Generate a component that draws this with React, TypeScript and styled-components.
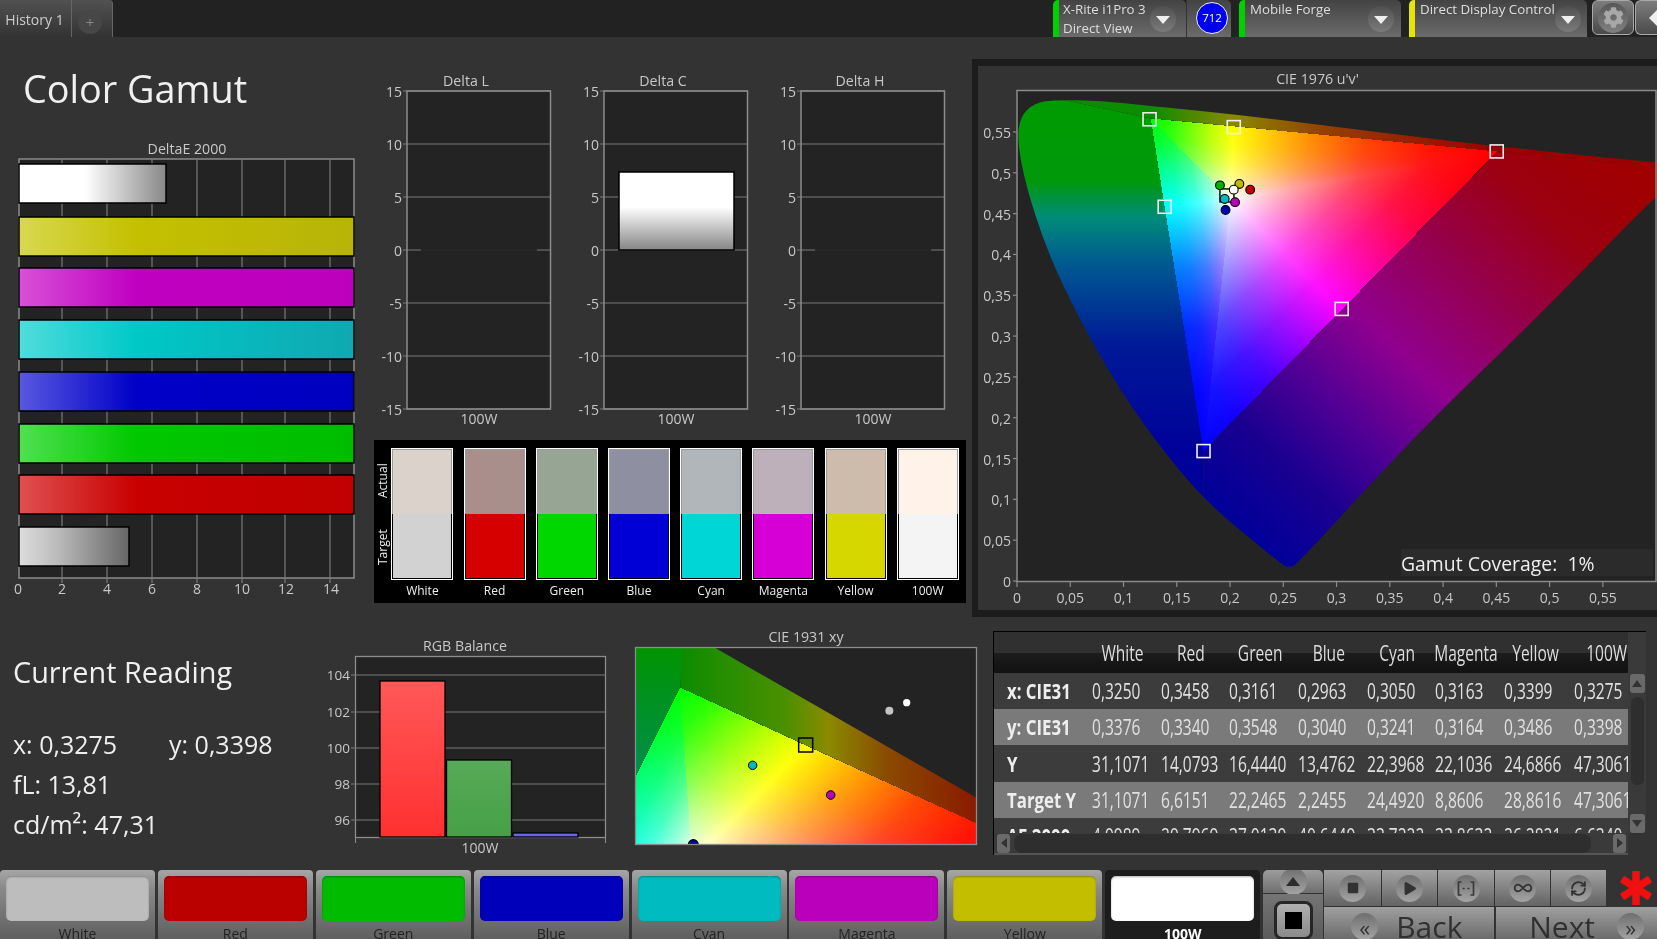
import React from 'react';
import styled, { createGlobalStyle } from 'styled-components';
import { Infinity as InfinityIcon, Play, RefreshCw, Square } from 'lucide-react';
import { FaCog } from 'react-icons/fa';

type Pt = [number, number];

const GlobalStyle = createGlobalStyle`
  html, body { margin: 0; padding: 0; background: #333; overflow: hidden; }
  body { font-family: "Open Sans", "Noto Sans", sans-serif; color: #ddd; }
  svg text { font-family: "Open Sans", "Noto Sans", sans-serif; }
`;

const Page = styled.div`
  width: 1657px;
  height: 939px;
  display: flex;
  flex-direction: column;
  overflow: hidden;
  background: #333;
`;

/* ---------- top bar ---------- */
const TopBar = styled.header`
  height: 37px;
  flex: none;
  display: flex;
  justify-content: space-between;
  background: #222;
`;
const Tabs = styled.div`
  display: flex;
`;
const Tab = styled.div`
  height: 37px;
  width: ${(p) => p.$w}px;
  box-sizing: border-box;
  display: flex;
  align-items: center;
  justify-content: ${(p) => (p.$last ? 'flex-start' : 'center')};
  padding: ${(p) => (p.$last ? '0 0 0 6px' : '2px 2px 0 0')};
  font-size: 14px;
  color: #ccc;
  border-right: 1px solid #666;
  border-radius: ${(p) => (p.$last ? '0 4px 0 0' : '0')};
  background: linear-gradient(#515151, #333);
`;
const PlusKnob = styled.span`
  width: 24px;
  height: 24px;
  border-radius: 50%;
  background: #474747;
  color: #888;
  font-size: 15px;
  line-height: 24px;
  text-align: center;
  margin-top: 6px;
`;
const Devices = styled.div`
  display: flex;
`;
const Device = styled.div`
  height: 37px;
  width: ${(p) => p.$w}px;
  margin-left: ${(p) => p.$ml}px;
  box-sizing: border-box;
  border-left: 6px solid ${(p) => p.$accent};
  border-radius: 5px 5px 0 0;
  background: linear-gradient(#434343, #6b6b6b);
  display: flex;
  justify-content: space-between;
  padding: 0 ${(p) => p.$pr}px 0 ${(p) => p.$pl}px;
  font-size: 13.3px;
  line-height: 19px;
  color: #ddd;
  white-space: nowrap;
`;
const Dropdown = styled.span`
  width: 26px;
  height: 26px;
  margin-top: 6px;
  border-radius: 50%;
  background: linear-gradient(#505050, #7b7b7b);
  display: flex;
  align-items: center;
  justify-content: center;
  flex: none;
  &::after {
    content: '';
    margin-top: 2px;
    border-left: 7px solid transparent;
    border-right: 7px solid transparent;
    border-top: 8px solid #eee;
  }
`;
const BadgeCell = styled.div`
  width: 45px;
  height: 37px;
  box-sizing: border-box;
  border-left: 1px solid #333;
  border-radius: 0 5px 0 0;
  background: linear-gradient(#434343, #6b6b6b);
  padding: 2px 0 0 9px;
`;
const Badge = styled.div`
  width: 32px;
  height: 32px;
  box-sizing: border-box;
  border-radius: 50%;
  border: 1px solid #eef;
  background: #0000ee;
  color: #fff;
  font-size: 11.5px;
  line-height: 30px;
  text-align: center;
`;
const TopButton = styled.div`
  height: 35px;
  width: ${(p) => p.$w}px;
  margin-left: ${(p) => p.$ml}px;
  box-sizing: border-box;
  border: 1px solid #aaa;
  border-right: ${(p) => (p.$open ? 'none' : '1px solid #aaa')};
  border-radius: ${(p) => (p.$open ? '6px 0 0 6px' : '6px')};
  background: linear-gradient(#7d7d7d, #4a4a4a);
  display: flex;
  align-items: center;
  justify-content: center;
  color: #a8a8a8;
`;
const GearKnob = styled.span`
  width: 30px;
  height: 30px;
  border-radius: 50%;
  background: linear-gradient(#585858, #808080);
  display: flex;
  align-items: center;
  justify-content: center;
`;
const LeftArrow = styled.span`
  margin-left: 12px;
  border-top: 8px solid transparent;
  border-bottom: 8px solid transparent;
  border-right: 8px solid #eee;
`;

/* ---------- upper part ---------- */
const Upper = styled.section`
  height: 580px;
  flex: none;
  display: flex;
`;
const GamutColumn = styled.div`
  width: 374px;
  flex: none;
  padding-top: 27px;
  box-sizing: border-box;
`;
const PageTitle = styled.h1`
  margin: 0 0 24px 23px;
  font-size: 37.8px;
  font-weight: 400;
  line-height: 50px;
  color: #f0f0f0;
`;
const ChartTitle = styled.div`
  height: ${(p) => p.$h || 20}px;
  line-height: ${(p) => (p.$h || 20) + (p.$drop ? 2 : 0)}px;
  font-size: 14.2px;
  text-align: center;
  color: #c8c8c8;
  white-space: nowrap;
`;
const DeltaColumn = styled.div`
  width: 592px;
  flex: none;
  padding-top: 33px;
  box-sizing: border-box;
`;
const DeltaRow = styled.div`
  display: flex;
  gap: 27px;
  padding-left: 7px;
`;
const DeltaChart = styled.div`
  width: 170px;
`;
const Drawing = styled.svg`
  display: block;
  overflow: visible;
`;
const SwatchPanel = styled.div`
  margin-top: 10px;
  width: 592px;
  height: 163px;
  box-sizing: border-box;
  background: #000;
  padding-top: 8px;
  display: flex;
`;
const SideLabels = styled.div`
  width: 17.4px;
  flex: none;
  height: 132px;
  display: flex;
  flex-direction: column;
`;
const SideLabel = styled.span`
  flex: 1;
  writing-mode: vertical-rl;
  transform: rotate(180deg);
  text-align: center;
  font-size: 12px;
  line-height: 17px;
  color: #eee;
`;
const Swatches = styled.div`
  display: grid;
  grid-template-columns: repeat(8, 62px);
  column-gap: 10.2px;
`;
const SwatchCol = styled.div`
  text-align: center;
  font-size: 12px;
  line-height: 22px;
  color: #eee;
`;
const SwatchBox = styled.div`
  height: 132px;
  box-sizing: border-box;
  border: 1px solid #fff;
  display: flex;
  flex-direction: column;
`;
const SwatchHalf = styled.div`
  flex: 1;
  box-sizing: border-box;
  background: ${(p) => p.$c};
  border: 1px solid ${(p) => (p.$frame ? '#9a9a9a' : 'transparent')};
  ${(p) => (p.$frame ? 'border-bottom: none;' : 'border-top: none;')}
  background-clip: ${(p) => (p.$frame ? 'border-box' : 'padding-box')};
`;
const CiePanel = styled.div`
  margin: 22px 0 0 6px;
  width: 685px;
  box-sizing: border-box;
  border: 7px solid #1c1c1c;
  border-right: none;
  border-left-width: 6px;
  position: relative;
`;
const CoverageBox = styled.div`
  position: absolute;
  left: 423px;
  top: 483px;
  width: 252px;
  height: 27px;
  background: #2b2b2b;
  font-size: 19.4px;
  line-height: 29px;
  color: #eee;
  white-space: pre;
`;

/* ---------- lower part ---------- */
const Lower = styled.section`
  height: 253px;
  flex: none;
  display: flex;
  align-items: flex-start;
`;
const Reading = styled.div`
  width: 324px;
  flex: none;
  box-sizing: border-box;
  padding: 35px 0 0 13px;
`;
const ReadingTitle = styled.div`
  font-size: 28.8px;
  line-height: 40px;
  color: #f0f0f0;
  margin-bottom: 32px;
`;
const ReadingRow = styled.div`
  display: grid;
  grid-template-columns: 156px auto;
  font-size: 25px;
  line-height: 40px;
  color: #eee;
`;
const RgbChart = styled.div`
  width: 282px;
  flex: none;
  padding-top: 19px;
`;
const XyChart = styled.div`
  width: 342px;
  flex: none;
  margin-left: 29px;
  padding-top: 10px;
`;
const TablePanel = styled.div`
  width: 653px;
  height: 224px;
  flex: none;
  margin: 14px 0 0 16px;
  box-sizing: border-box;
  border-top: 1px solid #000;
  border-left: 1px solid #000;
  display: grid;
  grid-template-columns: 634px 18px;
  grid-template-rows: 201px 22px;
  background: #333;
`;
const TableView = styled.div`
  overflow: hidden;
`;
const Row = styled.div`
  display: grid;
  grid-template-columns: 94px repeat(6, 68.7px) 70px 74px;
  height: ${(p) => p.$h}px;
  align-items: center;
  font-size: 21px;
  white-space: nowrap;
  background: ${(p) => p.$bg};
`;
const HeadCell = styled.div`
  display: flex;
  justify-content: center;
`;
const LabelCell = styled.div`
  padding-left: 13px;
  font-weight: 700;
  color: #eee;
`;
const ValueCell = styled.div`
  padding-left: 4px;
  color: #e0e0e0;
`;
const Narrow = styled.span`
  display: inline-block;
  transform: scaleX(${(p) => p.$x || 0.74});
  transform-origin: ${(p) => (p.$center ? 'center' : 'left')} center;
`;
const VScroll = styled.div`
  background: #3a3a3a;
  display: flex;
  flex-direction: column;
  align-items: center;
  padding-top: 42px;
  box-sizing: border-box;
  gap: 4px;
`;
const ArrowBtn = styled.div`
  width: 15px;
  height: 19px;
  flex: none;
  border-radius: 3px;
  background: #6a6a6a;
  display: flex;
  align-items: center;
  justify-content: center;
  &::after {
    content: '';
    border-left: 5px solid transparent;
    border-right: 5px solid transparent;
    ${(p) => (p.$down ? 'border-top: 7px solid #333;' : 'border-bottom: 7px solid #333;')}
  }
`;
const VThumb = styled.div`
  width: 13px;
  height: 88px;
  border-radius: 6px;
  background: #2e2e2e;
  margin-bottom: 25px;
`;
const HScroll = styled.div`
  background: #3a3a3a;
  display: flex;
  align-items: center;
  gap: 4px;
  padding-left: 3px;
  box-sizing: border-box;
  border-bottom: 2px solid #555;
`;
const HArrow = styled.div`
  width: 13px;
  height: 19px;
  flex: none;
  border-radius: 3px;
  background: #6a6a6a;
  display: flex;
  align-items: center;
  justify-content: center;
  &::after {
    content: '';
    border-top: 5px solid transparent;
    border-bottom: 5px solid transparent;
    ${(p) => (p.$right ? 'border-left: 6px solid #333;' : 'border-right: 6px solid #333;')}
  }
`;
const HThumb = styled.div`
  width: 577px;
  height: 19px;
  border-radius: 8px;
  background: #2e2e2e;
  margin-right: 18px;
`;

/* ---------- bottom bar ---------- */
const BottomBar = styled.footer`
  height: 69px;
  flex: none;
  display: flex;
  overflow: hidden;
`;
const ColorButtons = styled.div`
  display: flex;
  gap: 2.9px;
`;
const ColorButton = styled.div`
  width: 155px;
  height: 69px;
  box-sizing: border-box;
  padding: 6px 6px 0;
  overflow: hidden;
  border-radius: 4px 4px 0 0;
  background: ${(p) => (p.$active ? '#1d1d1d' : 'linear-gradient(#a6a6a6, #8b8b8b 25%, #5f5f5f)')};
  text-align: center;
  font-size: 14px;
  line-height: 24px;
  font-weight: ${(p) => (p.$active ? 700 : 400)};
  color: ${(p) => (p.$active ? '#fff' : '#222')};
`;
const ColorFace = styled.div`
  height: 45px;
  border-radius: 5px;
  background: ${(p) => p.$c};
  box-shadow: inset 0 1px 2px rgba(0, 0, 0, 0.3);
  margin-bottom: 1px;
`;
const StepColumn = styled.div`
  width: 60px;
  margin-left: 3px;
  flex: none;
  display: flex;
  flex-direction: column;
  gap: 1px;
`;
const StepUp = styled.div`
  height: 23px;
  border-radius: 5px 5px 0 0;
  background: linear-gradient(#9c9c9c, #6f6f6f);
  display: flex;
  align-items: center;
  justify-content: center;
`;
const StepBox = styled.div`
  flex: 1;
  background: linear-gradient(#757575, #5a5a5a);
  display: flex;
  justify-content: center;
  padding-top: 7px;
`;
const StopFrame = styled.div`
  width: 39px;
  height: 39px;
  box-sizing: border-box;
  border: 3px solid #262626;
  border-radius: 8px;
  background: linear-gradient(#b0b0b0, #8a8a8a);
  display: flex;
  align-items: center;
  justify-content: center;
  &::after {
    content: '';
    width: 17px;
    height: 17px;
    background: #000;
  }
`;
const Transport = styled.div`
  flex: 1;
  display: flex;
  flex-direction: column;
  gap: 1px;
  margin-left: 1px;
`;
const MediaRow = styled.div`
  height: 38px;
  display: flex;
`;
const MediaButton = styled.div`
  width: ${(p) => p.$w}px;
  box-sizing: border-box;
  border-right: 1px solid #333;
  background: linear-gradient(#a2a2a2, #636363);
  display: flex;
  align-items: center;
  justify-content: center;
`;
const Knob = styled.span`
  width: 27px;
  height: 27px;
  flex: none;
  border-radius: 50%;
  background: linear-gradient(#6f6f6f, #a4a4a4);
  display: flex;
  align-items: center;
  justify-content: center;
  color: #333;
  font-size: 22px;
`;
const StarCell = styled.div`
  flex: 1;
  display: flex;
  align-items: center;
  padding-left: 13px;
`;
const NavRow = styled.div`
  flex: 1;
  display: flex;
  gap: 2px;
`;
const NavButton = styled.div`
  width: ${(p) => p.$w}px;
  background: linear-gradient(#a0a0a0, #636363);
  display: flex;
  align-items: flex-start;
  gap: ${(p) => p.$gap}px;
  padding: 3px 0 0 ${(p) => p.$pl}px;
  box-sizing: border-box;
  font-size: 30px;
  line-height: 34px;
  color: #303030;
  overflow: hidden;
`;
const NavKnob = styled(Knob)`
  margin-top: 3px;
`;

/* ---------- drawing helpers ---------- */
const foot = (p: Pt, a: Pt, b: Pt): Pt => {
  const dx = b[0] - a[0];
  const dy = b[1] - a[1];
  const t = ((p[0] - a[0]) * dx + (p[1] - a[1]) * dy) / (dx * dx + dy * dy);
  return [a[0] + t * dx, a[1] + t * dy];
};
const pts = (list: Pt[]) => list.map((p) => p.join(',')).join(' ');

// quadratic smoothing through the midpoints of a closed outline
const smoothPath = (list: Pt[]) => {
  const mid = (a: Pt, b: Pt) => [(a[0] + b[0]) / 2, (a[1] + b[1]) / 2];
  let d = `M${mid(list[list.length - 1], list[0]).join(' ')}`;
  list.forEach((p, i) => {
    d += `Q${p.join(' ')} ${mid(p, list[(i + 1) % list.length]).join(' ')}`;
  });
  return d + 'Z';
};

const FanGroup = styled.g`
  isolation: isolate;
  polygon {
    mix-blend-mode: screen;
    shape-rendering: crispEdges;
  }
`;

const RED = [1, 0, 0];
const GREEN = [0, 1, 0];
const BLUE = [0, 0, 1];
type Stops = [number, number][];
const SOFT: Stops = [[0, 0], [0.25, 0.18], [0.5, 0.48], [0.75, 0.76], [1, 1]];
const MID: Stops = [[0, 0], [0.25, 0.08], [0.5, 0.28], [0.75, 0.62], [1, 1]];
const DEEP: Stops = [[0, 0], [0.25, 0.03], [0.5, 0.16], [0.75, 0.5], [1, 1]];
const Ramp = ({ id, from, to, mask, stops }: { id: string; from: Pt; to: Pt; mask: number[]; stops: Stops }) => (
  <linearGradient id={id} gradientUnits="userSpaceOnUse" x1={from[0]} y1={from[1]} x2={to[0]} y2={to[1]}>
    {stops.map(([o, v]) => (
      <stop key={o} offset={o} stopColor={`rgb(${mask.map((m) => Math.round(m * v * 255)).join(',')})`} />
    ))}
  </linearGradient>
);

// the bright gamut triangle, one wedge per primary/secondary pair
const GamutFan = ({ id, v }: { id: string; v: Record<string, Pt> }) => {
  const wedges: [Pt, Pt, string, number[], number[], Stops][] = [
    [v.r, v.y, '#f00', GREEN, BLUE, MID],
    [v.g, v.y, '#0f0', RED, BLUE, SOFT],
    [v.g, v.c, '#0f0', BLUE, RED, SOFT],
    [v.b, v.c, '#00f', GREEN, RED, DEEP],
    [v.b, v.m, '#00f', RED, GREEN, MID],
    [v.r, v.m, '#f00', BLUE, GREEN, MID],
  ];
  return (
    <FanGroup>
      {wedges.map(([p, s, pc, sc, tc, ramp], i) => {
        const shape = pts([p, s, v.w]);
        return (
          <g key={i}>
            <defs>
              <Ramp id={`${id}s${i}`} from={p} to={foot(p, s, v.w)} mask={sc} stops={ramp} />
              <Ramp id={`${id}t${i}`} from={foot(v.w, p, s)} to={v.w} mask={tc} stops={MID} />
            </defs>
            <polygon points={shape} fill={pc} />
            <polygon points={shape} fill={`url(#${id}s${i})`} />
            <polygon points={shape} fill={`url(#${id}t${i})`} />
          </g>
        );
      })}
    </FanGroup>
  );
};

const GRID = '#7a7a7a';
const AXIS = '#8c8c8c';
const LABEL = '#c8c8c8';

/* ---------- DeltaE 2000 ---------- */
const deBars = [
  { y: 6, w: 147, stops: ['#fff', '#fff', '#888'] },
  { y: 59, w: 335, stops: ['#d8d850', '#c4c000', '#b8b408'] },
  { y: 110, w: 335, stops: ['#d850d8', '#c000c0', '#bc00bc'] },
  { y: 162, w: 335, stops: ['#50dcdc', '#00c8c8', '#10a8b0'] },
  { y: 214, w: 335, stops: ['#5858e0', '#0000c8', '#0000c0'] },
  { y: 266, w: 335, stops: ['#50e050', '#00c800', '#00bc00'] },
  { y: 317, w: 335, stops: ['#e05050', '#c80000', '#c00000'] },
  { y: 369, w: 110, stops: ['#ddd', '#bbb', '#666'] },
];
const DeltaEChart = () => (
  <Drawing width={374} height={450}>
    <defs>
      {deBars.map((b, i) => (
        <linearGradient id={`de${i}`} key={i}>
          <stop offset="0" stopColor={b.stops[0]} />
          <stop offset={i === 0 ? '0.45' : '0.35'} stopColor={b.stops[1]} />
          <stop offset="1" stopColor={b.stops[2]} />
        </linearGradient>
      ))}
    </defs>
    <rect x="19" y="1" width="335" height="419" fill="#232323" stroke={AXIS} strokeWidth="1.5" />
    {[62, 107, 152, 197, 242, 285, 330].map((x) => (
      <line key={x} x1={x} x2={x} y1="1" y2="425" stroke={GRID} strokeWidth="1.2" />
    ))}
    {deBars.map((b, i) => (
      <rect key={i} x="19" y={b.y} width={b.w} height="39" fill={`url(#de${i})`} stroke="#000" strokeWidth="1.5" />
    ))}
    {[18, 62, 107, 152, 197, 242, 286, 331].map((x, i) => (
      <text key={x} x={x} y="436" fontSize="14" fill={LABEL} textAnchor="middle">
        {i * 2}
      </text>
    ))}
  </Drawing>
);

/* ---------- Delta L/C/H ---------- */
const deltaTicks = [15, 10, 5, 0, -5, -10, -15];
const DeltaPlot = ({ id, bar }: { id: string; bar?: boolean }) => (
  <Drawing width={170} height={340}>
    <defs>
      <linearGradient id={id} x1="0" x2="0" y1="0" y2="1">
        <stop offset="0" stopColor="#fff" />
        <stop offset="0.45" stopColor="#fff" />
        <stop offset="1" stopColor="#858585" />
      </linearGradient>
    </defs>
    <rect x="26" y="1" width="143.5" height="318" fill="#232323" />
    {deltaTicks.map((t, i) => {
      const y = 1 + i * 53;
      return (
        <g key={t}>
          <line x1="22" x2="169.5" y1={y} y2={y} stroke={GRID} strokeWidth="1.2" />
          <text x="21" y={y + 6} fontSize="14" fill={LABEL} textAnchor="end">
            {t}
          </text>
        </g>
      );
    })}
    <rect x="26" y="1" width="143.5" height="318" fill="none" stroke={AXIS} strokeWidth="1.5" />
    {bar ? (
      <rect x="41" y="82" width="115" height="78" fill={`url(#${id})`} stroke="#000" strokeWidth="1.5" />
    ) : (
      <line x1="40" x2="156" y1="160" y2="160" stroke="#1a1a1a" strokeWidth="1.5" />
    )}
    <text x="98" y="334" fontSize="14" fill={LABEL} textAnchor="middle">
      100W
    </text>
  </Drawing>
);

/* ---------- CIE 1976 ---------- */
// coordinates below were read off a crop, map them to the plot
const uv = (x: number, y: number): Pt => [(x - 85) / 2.316 + 39, (y - 85) / 2.8];
const horseshoe = (
  [
    [715, 1426], [690, 1405], [640, 1355], [520, 1235], [400, 1060], [300, 880], [210, 680],
    [150, 520], [105, 350], [86, 230], [92, 160], [125, 122], [170, 113], [280, 115], [400, 130],
    [600, 155], [800, 185], [1000, 215], [1200, 243], [1400, 268], [1568, 288], [1650, 300],
    [1568, 375], [1300, 710], [1000, 1060], [740, 1405],
  ] as Pt[]
).map(([x, y]) => uv(x, y));
const fan1976 = {
  r: uv(1197, 257), g: uv(395, 165), b: uv(517, 1095),
  y: uv(587, 187), c: uv(427, 412), m: uv(837, 700), w: uv(580, 392),
};
const gamutBoxes: Pt[] = [[392, 167], [587, 189], [1196, 257], [427, 412], [837, 698], [517, 1096]];
const gamutDots: [number, number, string][] = [
  [555, 352, '#00b000'], [600, 348, '#c0b800'], [625, 364, '#c00000'],
  [587, 364, '#fff'], [566, 390, '#00b8c0'], [590, 399, '#b800b8'], [568, 421, '#0000b0'],
];
const uTicks = ['0', '0,05', '0,1', '0,15', '0,2', '0,25', '0,3', '0,35', '0,4', '0,45', '0,5', '0,55'];

const Cie1976 = () => (
  <Drawing width={679} height={520}>
    <defs>
      <clipPath id="shoe">
        <path d={smoothPath(horseshoe)} />
      </clipPath>
      <linearGradient id="uvLeft" gradientUnits="userSpaceOnUse" x1="0" x2="0" y1={uv(0, 85)[1]} y2={uv(0, 1100)[1]}>
        <stop offset="0" stopColor="#009c00" />
        <stop offset="0.25" stopColor="#00980a" />
        <stop offset="0.35" stopColor="#008c78" />
        <stop offset="0.47" stopColor="#005c90" />
        <stop offset="0.7" stopColor="#001a98" />
        <stop offset="1" stopColor="#00009a" />
      </linearGradient>
      <linearGradient id="uvTop" gradientUnits="userSpaceOnUse" x1={uv(395, 0)[0]} x2={uv(1197, 0)[0]} y1="0" y2="0">
        <stop offset="0" stopColor="#0c8c00" />
        <stop offset="0.24" stopColor="#8a8800" />
        <stop offset="0.5" stopColor="#944000" />
        <stop offset="1" stopColor="#9c0000" />
      </linearGradient>
      <linearGradient id="uvRight" gradientUnits="userSpaceOnUse" x1={uv(1500, 0)[0]} y1={uv(0, 300)[1]} x2={uv(660, 0)[0]} y2={uv(0, 1380)[1]}>
        <stop offset="0" stopColor="#a00000" />
        <stop offset="0.167" stopColor="#9c0010" />
        <stop offset="0.33" stopColor="#960045" />
        <stop offset="0.55" stopColor="#90008f" />
        <stop offset="0.71" stopColor="#500095" />
        <stop offset="0.85" stopColor="#1a0090" />
        <stop offset="1" stopColor="#00009a" />
      </linearGradient>
    </defs>
    <rect x="39" y="0.5" width="640" height="491" fill="#232323" />
    <g clipPath="url(#shoe)">
      <polygon points={pts([uv(85, 85), uv(395, 165), uv(517, 1095), uv(517, 1460), uv(85, 1460)])} fill="url(#uvLeft)" />
      <polygon points={pts([uv(85, 85), uv(1700, 85), uv(1700, 315), uv(1197, 257), uv(395, 165)])} fill="url(#uvTop)" />
      <polygon points={pts([uv(1197, 257), uv(1700, 315), uv(1700, 1460), uv(517, 1460), uv(517, 1095)])} fill="url(#uvRight)" />
      <GamutFan id="uvFan" v={fan1976} />
    </g>
    <rect x="39" y="0.5" width="639" height="491" fill="none" stroke={AXIS} strokeWidth="1.5" />
    {gamutBoxes.map(([x, y]) => {
      const [px, py] = uv(x, y);
      return <rect key={x} x={px - 6.5} y={py - 6.5} width="13" height="13" fill="none" stroke="#eee" strokeWidth="1.6" />;
    })}
    <rect x={uv(555, 0)[0]} y={uv(0, 362)[1]} width="14" height="13" fill="none" stroke="#000" strokeWidth="1.4" />
    {gamutDots.map(([x, y, c]) => {
      const [px, py] = uv(x, y);
      return <circle key={x} cx={px} cy={py} r="4.4" fill={c} stroke="#000" strokeWidth="1.1" />;
    })}
    {uTicks.map((t, i) => {
      const x = 39 + i * 53.26;
      const y = 491 - i * 40.82;
      return (
        <g key={t}>
          <line x1={x} x2={x} y1="491" y2="497" stroke={AXIS} strokeWidth="1.2" />
          <text x={x} y="513" fontSize="14" fill={LABEL} textAnchor="middle">
            {t}
          </text>
          <line x1="35" x2="39" y1={y} y2={y} stroke={AXIS} strokeWidth="1.2" />
          <text x="33" y={y + 6} fontSize="14" fill={LABEL} textAnchor="end">
            {t}
          </text>
        </g>
      );
    })}
  </Drawing>
);

/* ---------- RGB Balance ---------- */
const rgbTicks: [string, number][] = [['104', 19], ['102', 56], ['100', 92], ['98', 128], ['96', 164]];
const rgbBars = [
  { x: 56, y: 25, c: ['#ff5858', '#ff3030'] },
  { x: 122.5, y: 104, c: ['#58aa58', '#46a046'] },
  { x: 189, y: 177, c: ['#7070f0', '#5c5ce8'] },
];
const RgbPlot = () => (
  <Drawing width={282} height={205}>
    <defs>
      {rgbBars.map((b, i) => (
        <linearGradient key={i} id={`rgb${i}`} x1="0" x2="0" y1="0" y2="1">
          <stop offset="0" stopColor={b.c[0]} />
          <stop offset="1" stopColor={b.c[1]} />
        </linearGradient>
      ))}
    </defs>
    <rect x="31.5" y="0.5" width="250" height="181" fill="#232323" stroke={AXIS} strokeWidth="1.3" />
    {rgbTicks.map(([t, y]) => (
      <g key={t}>
        <line x1="27" x2="281.5" y1={y} y2={y} stroke={GRID} strokeWidth="1.2" />
        <text x="26" y={y + 5} fontSize="13.5" fill={LABEL} textAnchor="end">
          {t}
        </text>
      </g>
    ))}
    {rgbBars.map((b, i) => (
      <rect key={i} x={b.x} y={b.y} width="65" height={181 - b.y} fill={`url(#rgb${i})`} stroke="#000" strokeWidth="1.3" />
    ))}
    <line x1="31.5" x2="31.5" y1="181" y2="187" stroke={AXIS} />
    <line x1="281.5" x2="281.5" y1="181" y2="187" stroke={AXIS} />
    <text x="156" y="197" fontSize="14" fill={LABEL} textAnchor="middle">
      100W
    </text>
  </Drawing>
);

/* ---------- CIE 1931 ---------- */
const xy = (x: number, y: number): Pt => [(x - 44) / 3, (y - 83) / 3];
const fan1931 = {
  r: xy(1250, 695), g: xy(180, 205), b: xy(-200, 960),
  y: xy(555, 378), c: xy(-98, 760), m: xy(600, 900), w: xy(215, 725),
};
const Cie1931 = () => (
  <Drawing width={342} height={198}>
    <defs>
      <clipPath id="xyClip">
        <rect x="0" y="0" width="342" height="198" />
      </clipPath>
      <linearGradient id="xyTop" gradientUnits="userSpaceOnUse" x1={xy(180, 0)[0]} x2={xy(1068, 0)[0]} y1="0" y2="0">
        <stop offset="0" stopColor="#0c8c00" />
        <stop offset="0.36" stopColor="#4c9000" />
        <stop offset="0.5" stopColor="#8a8a00" />
        <stop offset="0.7" stopColor="#8a4a00" />
        <stop offset="1" stopColor="#8a1a00" />
      </linearGradient>
      <linearGradient id="xyLeft" gradientUnits="userSpaceOnUse" x1="0" x2="0" y1="0" y2={xy(0, 470)[1]}>
        <stop offset="0" stopColor="#009400" />
        <stop offset="1" stopColor="#008e50" />
      </linearGradient>
    </defs>
    <rect x="0.5" y="0.5" width="341" height="197" fill="#232323" />
    <g clipPath="url(#xyClip)">
      <polygon points={pts([xy(180, 83), xy(280, 83), xy(1080, 542), xy(1080, 618), xy(180, 205)])} fill="url(#xyTop)" />
      <polygon points={pts([xy(44, 83), xy(185, 83), xy(180, 205), xy(44, 476)])} fill="url(#xyLeft)" />
      <GamutFan id="xyFan" v={fan1931} />
      <circle cx={xy(219, 0)[0]} cy={xy(0, 676)[1]} r="5" fill="#0000b0" stroke="#000" strokeWidth="1.1" />
    </g>
    <rect x="0.5" y="0.5" width="341" height="197" fill="none" stroke={AXIS} strokeWidth="1.3" />
    <rect x={xy(535, 0)[0]} y={xy(0, 356)[1]} width="14" height="14" fill="none" stroke="#000" strokeWidth="1.5" />
    <circle cx={xy(397, 0)[0]} cy={xy(0, 438)[1]} r="4.2" fill="#00b8c0" stroke="#000" strokeWidth="1" />
    <circle cx={xy(631, 0)[0]} cy={xy(0, 527)[1]} r="4.3" fill="#b800b8" stroke="#000" strokeWidth="1" />
    <circle cx={xy(807, 0)[0]} cy={xy(0, 274)[1]} r="4" fill="#c4c4c4" />
    <circle cx={xy(859, 0)[0]} cy={xy(0, 250)[1]} r="3.6" fill="#fff" />
  </Drawing>
);

/* ---------- data ---------- */
const swatches = [
  ['White', '#dcd2cc', '#d2d2d2'],
  ['Red', '#a98f8b', '#d60000'],
  ['Green', '#97a594', '#00d600'],
  ['Blue', '#8e90a2', '#0000d6'],
  ['Cyan', '#b0b6ba', '#00d6d6'],
  ['Magenta', '#bdb0bb', '#d600d6'],
  ['Yellow', '#cdbcab', '#d6d600'],
  ['100W', '#fff2e8', '#f4f4f4'],
];
const headers = ['White', 'Red', 'Green', 'Blue', 'Cyan', 'Magenta', 'Yellow', '100W'];
const tableRows: { label: string; h: number; bg: string; values: string[] }[] = [
  { label: 'x: CIE31', h: 36, bg: '#3c3c3c', values: ['0,3250', '0,3458', '0,3161', '0,2963', '0,3050', '0,3163', '0,3399', '0,3275'] },
  { label: 'y: CIE31', h: 36, bg: '#7a7a7a', values: ['0,3376', '0,3340', '0,3548', '0,3040', '0,3241', '0,3164', '0,3486', '0,3398'] },
  { label: 'Y', h: 37, bg: '#3c3c3c', values: ['31,1071', '14,0793', '16,4440', '13,4762', '22,3968', '22,1036', '24,6866', '47,3061'] },
  { label: 'Target Y', h: 36, bg: '#7a7a7a', values: ['31,1071', '6,6151', '22,2465', '2,2455', '24,4920', '8,8606', '28,8616', '47,3061'] },
  { label: 'ΔE 2000', h: 36, bg: '#3c3c3c', values: ['4,9989', '29,7969', '37,0139', '40,6449', '33,7222', '33,8632', '26,2821', '6,6340'] },
];
const colorButtons = [
  ['White', '#bdbdbd'],
  ['Red', '#bb0000'],
  ['Green', '#00bb00'],
  ['Blue', '#0000bb'],
  ['Cyan', '#00bcc0'],
  ['Magenta', '#bb00bb'],
  ['Yellow', '#c4be00'],
  ['100W', '#fff'],
];

const FitIcon = () => (
  <svg width="18" height="15" viewBox="0 0 18 15" fill="none" stroke="#3a3a3a" strokeWidth="1.7">
    <path d="M4.5 1H1.5v13h3M13.5 1h3v13h-3" />
    <path d="M5.5 7.5h2.2M10.3 7.5h2.2" strokeWidth="1.5" />
  </svg>
);

const UpTriangle = () => (
  <svg width="14" height="9" viewBox="0 0 14 9">
    <path d="M7 0l7 9H0z" fill="#2c2c2c" />
  </svg>
);

const App = () => (
  <Page>
    <GlobalStyle />
    <TopBar>
      <Tabs>
        <Tab $w={72}>History 1</Tab>
        <Tab $w={41} $last>
          <PlusKnob>+</PlusKnob>
        </Tab>
      </Tabs>
      <Devices>
        <Device $w={133} $ml={0} $accent="#00d000" $pl={4} $pr={10}>
          <div>
            X-Rite i1Pro 3
            <br />
            Direct View
          </div>
          <Dropdown />
        </Device>
        <BadgeCell>
          <Badge>712</Badge>
        </BadgeCell>
        <Device $w={162} $ml={8} $accent="#00d000" $pl={5} $pr={7}>
          <div>Mobile Forge</div>
          <Dropdown />
        </Device>
        <Device $w={178} $ml={8} $accent="#e6e600" $pl={5} $pr={12}>
          <div>Direct Display Control</div>
          <Dropdown />
        </Device>
        <TopButton $w={42} $ml={5}>
          <GearKnob>
            <FaCog size={21} />
          </GearKnob>
        </TopButton>
        <TopButton $w={22} $ml={1} $open>
          <LeftArrow />
        </TopButton>
      </Devices>
    </TopBar>

    <Upper>
      <GamutColumn>
        <PageTitle>Color Gamut</PageTitle>
        <ChartTitle $drop>DeltaE 2000</ChartTitle>
        <DeltaEChart />
      </GamutColumn>
      <DeltaColumn>
        <DeltaRow>
          <DeltaChart>
            <ChartTitle $drop>Delta L</ChartTitle>
            <DeltaPlot id="dl" />
          </DeltaChart>
          <DeltaChart>
            <ChartTitle $drop>Delta C</ChartTitle>
            <DeltaPlot id="dc" bar />
          </DeltaChart>
          <DeltaChart>
            <ChartTitle $drop>Delta H</ChartTitle>
            <DeltaPlot id="dh" />
          </DeltaChart>
        </DeltaRow>
        <SwatchPanel>
          <SideLabels>
            <SideLabel>Actual</SideLabel>
            <SideLabel>Target</SideLabel>
          </SideLabels>
          <Swatches>
            {swatches.map(([name, actual, target]) => (
              <SwatchCol key={name}>
                <SwatchBox>
                  <SwatchHalf $c={actual} $frame />
                  <SwatchHalf $c={target} />
                </SwatchBox>
                {name}
              </SwatchCol>
            ))}
          </Swatches>
        </SwatchPanel>
      </DeltaColumn>
      <CiePanel>
        <ChartTitle $h={24} $drop>
          CIE 1976 u'v'
        </ChartTitle>
        <Cie1976 />
        <CoverageBox>Gamut Coverage:  1%</CoverageBox>
      </CiePanel>
    </Upper>

    <Lower>
      <Reading>
        <ReadingTitle>Current Reading</ReadingTitle>
        <ReadingRow>
          <span>x: 0,3275</span>
          <span>y: 0,3398</span>
        </ReadingRow>
        <ReadingRow>
          <span>fL: 13,81</span>
        </ReadingRow>
        <ReadingRow>
          <span>cd/m²: 47,31</span>
        </ReadingRow>
      </Reading>
      <RgbChart>
        <ChartTitle>RGB Balance</ChartTitle>
        <RgbPlot />
      </RgbChart>
      <XyChart>
        <ChartTitle>CIE 1931 xy</ChartTitle>
        <Cie1931 />
      </XyChart>
      <TablePanel>
        <TableView>
          <Row $h={41} $bg="linear-gradient(#303030 50%, #1c1c1c 52%, #111)">
            <div />
            {headers.map((h) => (
              <HeadCell key={h}>
                <Narrow $center>{h}</Narrow>
              </HeadCell>
            ))}
          </Row>
          {tableRows.map((r) => (
            <Row key={r.label} $h={r.h} $bg={r.bg}>
              <LabelCell>
                <Narrow $x={0.8}>{r.label}</Narrow>
              </LabelCell>
              {r.values.map((v, i) => (
                <ValueCell key={i}>
                  <Narrow>{v}</Narrow>
                </ValueCell>
              ))}
            </Row>
          ))}
        </TableView>
        <VScroll>
          <ArrowBtn />
          <VThumb />
          <ArrowBtn $down />
        </VScroll>
        <HScroll>
          <HArrow />
          <HThumb />
          <HArrow $right />
        </HScroll>
      </TablePanel>
    </Lower>

    <BottomBar>
      <ColorButtons>
        {colorButtons.map(([name, c]) => (
          <ColorButton key={name} $active={name === '100W'}>
            <ColorFace $c={c} />
            {name}
          </ColorButton>
        ))}
      </ColorButtons>
      <StepColumn>
        <StepUp>
          <Knob>
            <UpTriangle />
          </Knob>
        </StepUp>
        <StepBox>
          <StopFrame />
        </StepBox>
      </StepColumn>
      <Transport>
        <MediaRow>
          <MediaButton $w={58}>
            <Knob>
              <Square size={14} fill="#333" strokeWidth={0} />
            </Knob>
          </MediaButton>
          <MediaButton $w={56}>
            <Knob>
              <Play size={17} fill="#333" strokeWidth={0} />
            </Knob>
          </MediaButton>
          <MediaButton $w={57}>
            <Knob>
              <FitIcon />
            </Knob>
          </MediaButton>
          <MediaButton $w={56}>
            <Knob>
              <InfinityIcon size={20} strokeWidth={2.2} />
            </Knob>
          </MediaButton>
          <MediaButton $w={56}>
            <Knob>
              <RefreshCw size={17} strokeWidth={2.6} />
            </Knob>
          </MediaButton>
          <StarCell>
            <svg width="32" height="36" viewBox="0 0 32 36" stroke="#f01010" strokeWidth="7.5">
              <path d="M16 1v34M2 9l28 18M30 9L2 27" />
            </svg>
          </StarCell>
        </MediaRow>
        <NavRow>
          <NavButton $w={170} $pl={27} $gap={18}>
            <NavKnob>«</NavKnob>
            Back
          </NavButton>
          <NavButton $w={161} $pl={33} $gap={22}>
            Next
            <NavKnob>»</NavKnob>
          </NavButton>
        </NavRow>
      </Transport>
    </BottomBar>
  </Page>
);

export default App;
